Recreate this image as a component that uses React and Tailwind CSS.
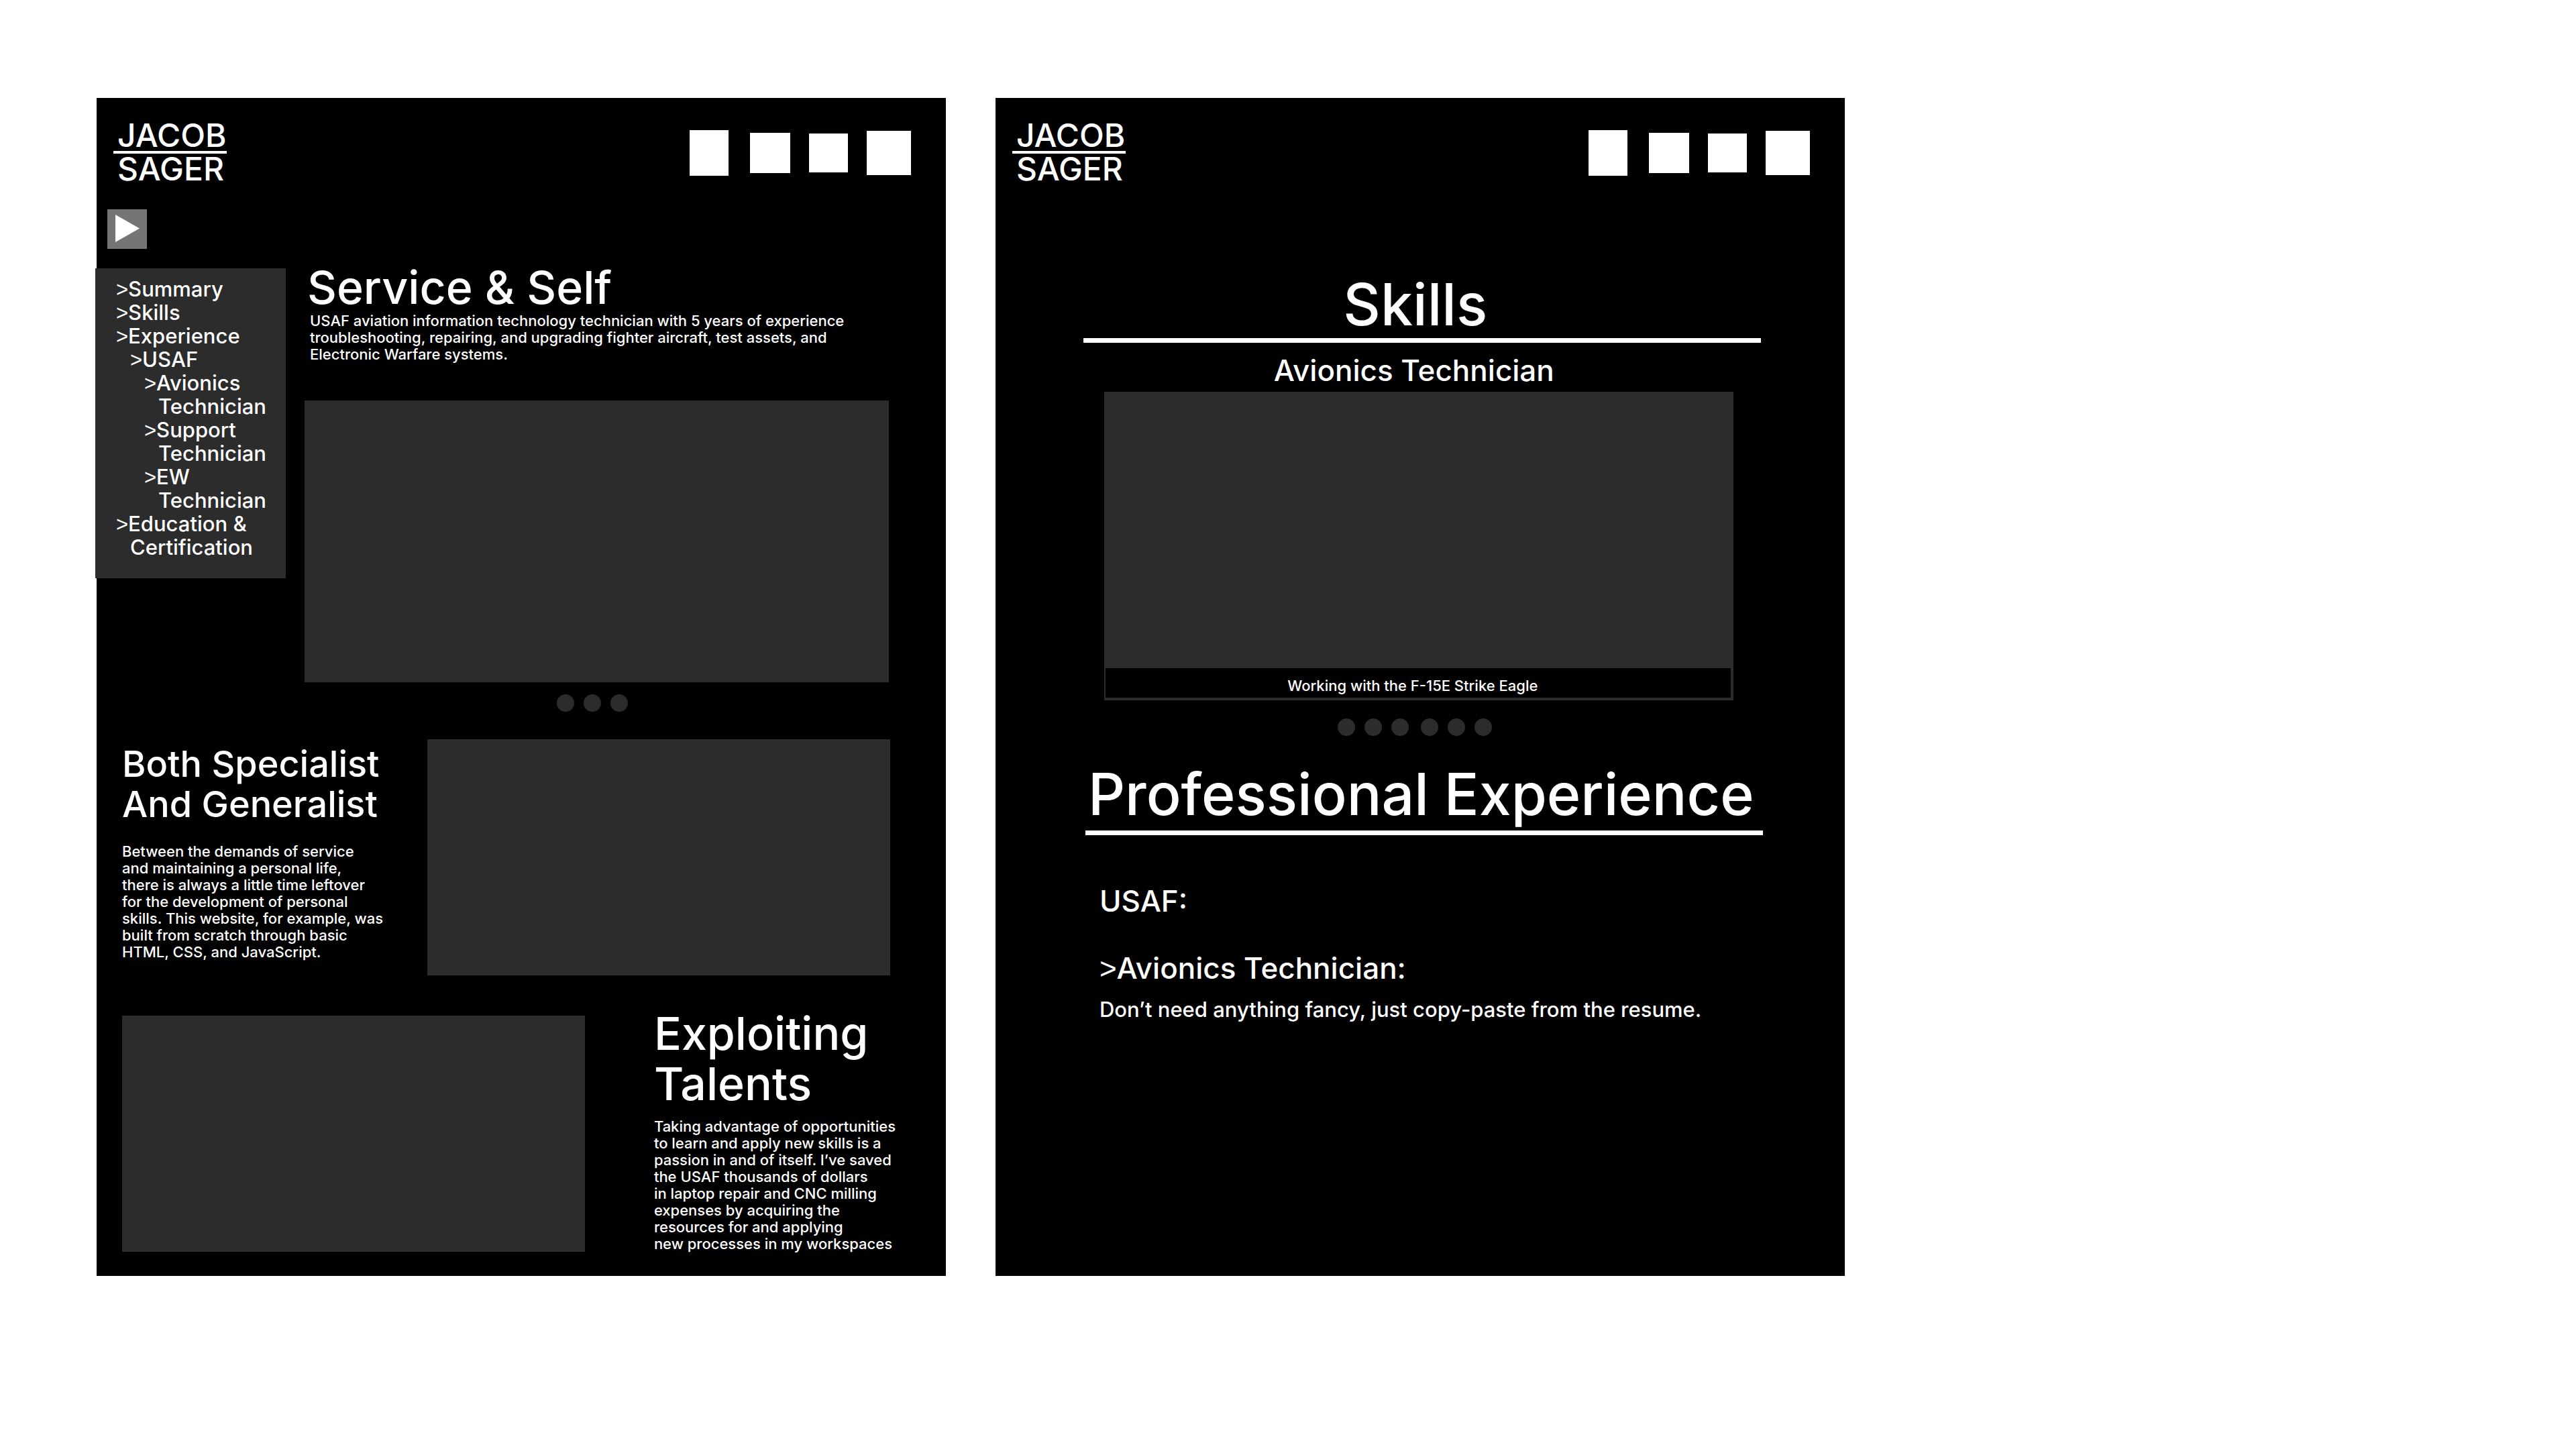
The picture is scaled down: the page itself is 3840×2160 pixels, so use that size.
import React from "react";

const LINKS = [
  { label: "Summary", level: 0 },
  { label: "Skills", level: 0 },
  { label: "Experience", level: 0 },
  { label: "USAF", level: 1 },
  { label: "Avionics", rest: "Technician", level: 2 },
  { label: "Support", rest: "Technician", level: 2 },
  { label: "EW", rest: "Technician", level: 2 },
  { label: "Education &", rest: "Certification", level: 0 },
];

const INDENT = ["pl-[52px]", "pl-[73px]", "pl-[94px]"];

const BOTH_LINES = [
  "Between the demands of service",
  "and maintaining a personal life,",
  "there is always a little time leftover",
  "for the development of personal",
  "skills. This website, for example, was",
  "built from scratch through basic",
  "HTML, CSS, and JavaScript.",
];

const TALENT_LINES = [
  "Taking advantage of opportunities",
  "to learn and apply new skills is a",
  "passion in and of itself. I’ve saved",
  "the USAF thousands of dollars",
  "in laptop repair and CNC milling",
  "expenses by acquiring the",
  "resources for and applying",
  "new processes in my workspaces",
];

function Lines({ lines, className }) {
  return (
    <p className={"text-[22px] leading-[25px] whitespace-nowrap " + className}>
      {lines.map((line) => (
        <span key={line} className="block">
          {line}
        </span>
      ))}
    </p>
  );
}

function Chevron() {
  return <span className="font-['Liberation_Sans',sans-serif] leading-5 font-normal">&gt;</span>;
}

function Header() {
  return (
    <header className="flex items-start justify-between pt-[37px] pr-[52px] pl-[25px]">
      <a href="#home" className="block w-[169px] text-[48px] leading-[38px]">
        <span className="block border-b-4 border-white pb-1 pl-1.5">JACOB</span>
        <span className="mt-1 block pl-1.5">SAGER</span>
      </a>
      <nav aria-label="Social" className="mt-[11px] flex items-center">
        <a href="#one" aria-label="Link one" className="mr-8 h-[68px] w-[58px] bg-white" />
        <a href="#two" aria-label="Link two" className="mr-7 h-[60px] w-[60px] bg-white" />
        <a href="#three" aria-label="Link three" className="mr-7 h-[58px] w-[58px] bg-white" />
        <a href="#four" aria-label="Link four" className="h-[66px] w-[66px] bg-white" />
      </nav>
    </header>
  );
}

function Dot({ n }) {
  return (
    <button
      type="button"
      aria-label={"Slide " + n}
      className="h-[26px] w-[26px] rounded-full bg-[#2c2c2c]"
    />
  );
}

function SideNav() {
  return (
    <nav
      aria-label="Sections"
      className="-ml-[2px] w-[284px] flex-none self-start bg-[#2c2c2c] pt-[13px] pb-[29px]"
    >
      <ul className="text-[31px] leading-[35px]">
        {LINKS.map(({ label, rest, level }, i) => (
          <li key={i} className={INDENT[level]}>
            <a href="#section" className="block -indent-[21px]">
              <Chevron />
              {label}
              {rest && <span className="block indent-0">{rest}</span>}
            </a>
          </li>
        ))}
      </ul>
    </nav>
  );
}

function HomePanel() {
  return (
    <article className="w-[34.25%] flex-none bg-black pb-[35px]">
      <Header />
      <button
        type="button"
        aria-label="Toggle menu"
        className="mt-[41px] ml-4 block h-[59px] w-[59px] bg-[#757575]"
      >
        <svg viewBox="0 0 59 59" className="h-full w-full" aria-hidden="true">
          <path d="M12 8v41l36-20.500z" fill="#fff" />
        </svg>
      </button>

      <div className="mt-[29px] flex gap-7 pr-[85px]">
        <SideNav />
        <section className="flex-1">
          <h1 className="pl-1 text-[68px] leading-[56px] whitespace-nowrap">Service &amp; Self</h1>
          <p className="mt-[10px] max-w-[830px] pl-2 text-[22px] leading-[25px]">
            USAF aviation information technology technician with 5 years of experience
            troubleshooting, repairing, and upgrading fighter aircraft, test assets, and
            <br />
            Electronic Warfare systems.
          </p>
          <div className="mt-[56px] h-[420px] bg-[#2c2c2c]" />
          <div className="mt-[18px] flex justify-center gap-[14px] pr-3">
            {[1, 2, 3].map((n) => (
              <Dot key={n} n={n} />
            ))}
          </div>
        </section>
      </div>

      <section className="mt-[41px] flex pr-[83px] pl-[38px]">
        <div className="w-[455px] flex-none pt-[7px]">
          <h2 className="text-[54px] leading-[60px] whitespace-nowrap">
            <span className="block">Both Specialist</span>
            <span className="block">And Generalist</span>
          </h2>
          <Lines lines={BOTH_LINES} className="mt-7" />
        </div>
        <div className="h-[352px] flex-1 bg-[#2c2c2c]" />
      </section>

      <section className="mt-[49px] flex pl-[38px]">
        <div className="mt-[11px] h-[352px] flex-1 bg-[#2c2c2c]" />
        <div className="ml-[103px] w-[435px] flex-none">
          <h2 className="text-[68px] leading-[75px]">
            <span className="block">Exploiting</span>
            <span className="block">Talents</span>
          </h2>
          <Lines lines={TALENT_LINES} className="mt-[14px]" />
        </div>
      </section>
    </article>
  );
}

function SkillsPanel() {
  return (
    <article className="w-[34.25%] flex-none bg-black">
      <Header />
      <section className="mt-[143px] pr-[125px] pl-[131px] text-center">
        <h1 className="pr-5 text-[86px] leading-[80px]">Skills</h1>
        <hr className="mt-[10px] h-[7px] border-0 bg-white" />
        <h2 className="mt-4 pr-6 text-[44px] leading-[50px]">Avionics Technician</h2>
        <figure className="mt-[7px] mr-[41px] ml-[31px] bg-[#2c2c2c] pr-1 pb-1 pl-[2px]">
          <div className="h-[412px]" />
          <figcaption className="bg-black pt-2 pr-4 text-[22px] leading-[36px]">
            Working with the F-15E Strike Eagle
          </figcaption>
        </figure>
        <div className="mt-[27px] flex justify-center gap-[18px] pr-[22px]">
          <div className="flex gap-[14px]">
            {[1, 2, 3].map((n) => (
              <Dot key={n} n={n} />
            ))}
          </div>
          <div className="flex gap-[14px]">
            {[4, 5, 6].map((n) => (
              <Dot key={n} n={n} />
            ))}
          </div>
        </div>
      </section>

      <section className="mt-[47px] pr-[122px] pl-[134px]">
        <h1 className="pl-1 text-[86px] leading-[80px] whitespace-nowrap">
          Professional Experience
        </h1>
        <hr className="mt-[14px] h-[7px] border-0 bg-white" />
        <div className="pl-[21px]">
          <h2 className="mt-[73px] text-[44px] leading-[50px]">USAF:</h2>
          <h3 className="mt-[50px] text-[44px] leading-[50px]">
            <Chevron />
            Avionics Technician:
          </h3>
          <p className="mt-[19px] text-[31px] leading-[35px]">
            Don’t need anything fancy, just copy-paste from the resume.
          </p>
        </div>
      </section>
    </article>
  );
}

export default function App() {
  return (
    <main className="flex min-h-screen items-stretch gap-[74px] bg-white pt-[146px] pb-[258px] pl-[144px] font-['Inter',sans-serif] font-medium text-white">
      <HomePanel />
      <SkillsPanel />
    </main>
  );
}
